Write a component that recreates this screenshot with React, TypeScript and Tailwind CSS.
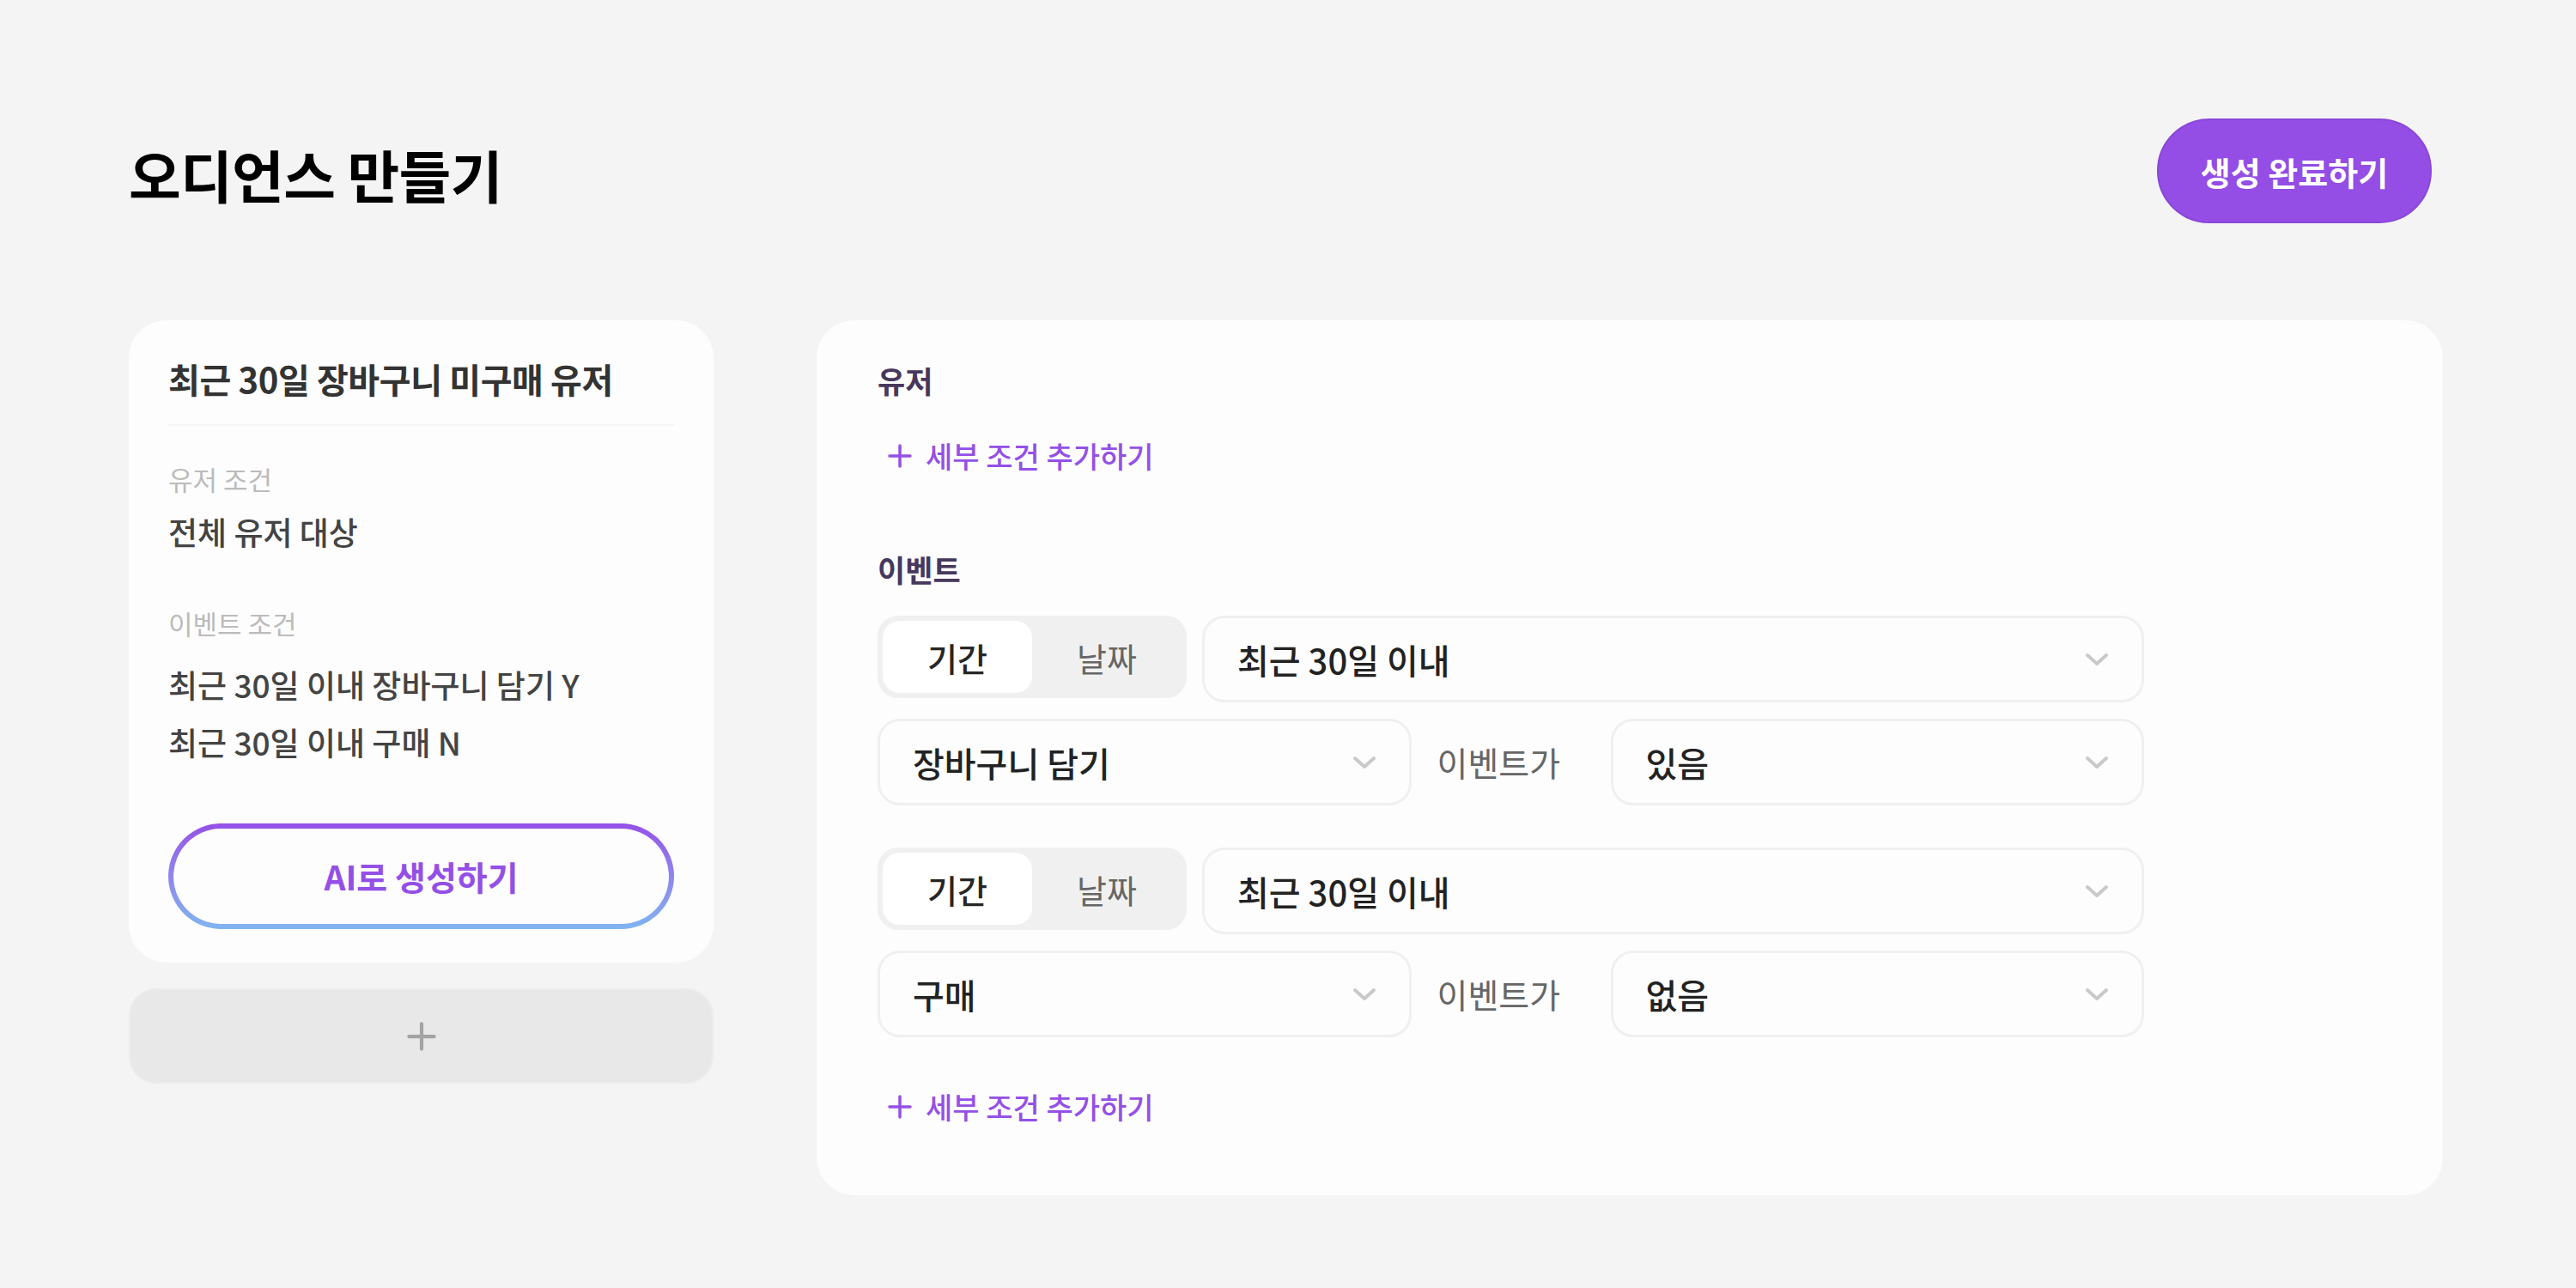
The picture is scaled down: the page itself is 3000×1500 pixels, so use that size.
import React, { useState } from 'react';

interface EventCondition {
  id: number;
  period: string;
  event: string;
  exists: string;
}

const Chevron = () => (
  <svg width="28" height="16" viewBox="0 0 28 16" fill="none">
    <path d="M3 3L14 13L25 3" stroke="#c9c9c9" strokeWidth="4" strokeLinecap="round" strokeLinejoin="round" />
  </svg>
);

const PlusIcon = ({ size, color }: { size: number; color: string }) => (
  <svg width={size} height={size} viewBox="0 0 28 28" fill="none">
    <path d="M14 2V26M2 14H26" stroke={color} strokeWidth="3.5" strokeLinecap="round" />
  </svg>
);

const SelectBox = ({ value, className = '' }: { value: string; className?: string }) => (
  <div
    className={`flex h-[101px] items-center justify-between rounded-[26px] border-[3px] border-[#f0f0f0] bg-[#fdfdfd] pl-[38px] pr-[38px] ${className}`}
  >
    <span className="text-[40px] font-medium text-[#222222]">{value}</span>
    <Chevron />
  </div>
);

const PeriodToggle = () => {
  const [mode, setMode] = useState<'period' | 'date'>('period');

  return (
    <div className="flex h-[96px] w-[360px] shrink-0 rounded-[24px] bg-[#f0f0f0] p-[6px]">
      <button
        type="button"
        onClick={() => setMode('period')}
        className={`flex-1 rounded-[20px] text-[38px] ${mode === 'period' ? 'bg-white font-medium text-[#262626]' : 'text-[#666666]'}`}
      >
        기간
      </button>
      <button
        type="button"
        onClick={() => setMode('date')}
        className={`flex-1 rounded-[20px] text-[38px] ${mode === 'date' ? 'bg-white font-medium text-[#262626]' : 'text-[#666666]'}`}
      >
        날짜
      </button>
    </div>
  );
};

const AddDetailButton = () => (
  <button type="button" className="flex h-[40px] items-center gap-[16px] pl-[12px] text-[#9450e6]">
    <PlusIcon size={28} color="#9450e6" />
    <span className="text-[34px] font-medium leading-[40px]">세부 조건 추가하기</span>
  </button>
);

const EventGroup = ({ condition }: { condition: EventCondition }) => (
  <div className="flex flex-col gap-[19px]">
    <div className="flex items-start gap-[18px]">
      <PeriodToggle />
      <SelectBox value={condition.period} className="flex-1" />
    </div>
    <div className="flex items-center">
      <SelectBox value={condition.event} className="flex-1" />
      <div className="w-[232px] shrink-0 pl-[30px] text-[39px] text-[#666666]">이벤트가</div>
      <SelectBox value={condition.exists} className="flex-1" />
    </div>
  </div>
);

const App = () => {
  const conditions: EventCondition[] = [
    { id: 1, period: '최근 30일 이내', event: '장바구니 담기', exists: '있음' },
    { id: 2, period: '최근 30일 이내', event: '구매', exists: '없음' },
  ];

  return (
    <div className="h-[1500px] w-full bg-[#f4f4f4] pl-[150px] pr-[155px] pt-[138px] font-['Noto_Sans_CJK_KR','Noto_Sans',sans-serif]">
      {/* Header */}
      <div className="flex items-center justify-between">
        <h1 className="mt-[6px] text-[66px] font-bold leading-[76px] tracking-[-0.01em] text-black">오디언스 만들기</h1>
        <button
          type="button"
          className="mr-[13px] h-[122px] w-[320px] rounded-full border-2 border-[#8a47d8] bg-[#944de5] text-[38px] font-bold text-white"
        >
          생성 완료하기
        </button>
      </div>

      <div className="mt-[113px] flex items-start gap-[120px]">
        {/* Left column */}
        <div className="flex w-[681px] shrink-0 flex-col gap-[30px]">
          <div className="rounded-[44px] bg-[#fdfdfd] px-[46px] pb-[39px] pt-[46px]">
            <div className="text-[40px] font-bold leading-[44px] tracking-[-0.01em] text-[#333333]">
              최근 30일 장바구니 미구매 유저
            </div>
            <div className="mt-[31px] h-[2px] bg-[#f5f5f5]" />

            <div className="mt-[44px] text-[31px] leading-[36px] text-[#bbbbbb]">유저 조건</div>
            <div className="mt-[23px] text-[37px] font-medium leading-[40px] text-[#444444]">전체 유저 대상</div>

            <div className="mt-[69px] text-[31px] leading-[36px] text-[#bbbbbb]">이벤트 조건</div>
            <div className="mt-[20px] text-[37px] font-medium leading-[67px] text-[#444444]">
              <div>최근 30일 이내 장바구니 담기 Y</div>
              <div>최근 30일 이내 구매 N</div>
            </div>

            <div className="mt-[61px] rounded-full bg-gradient-to-b from-[#9450e6] to-[#7fb4f1] p-[6px]">
              <button
                type="button"
                className="flex h-[111px] w-full items-center justify-center rounded-full bg-[#fdfdfd] text-[39px] font-bold text-[#9450e6]"
              >
                AI로 생성하기
              </button>
            </div>
          </div>

          <button
            type="button"
            className="flex h-[111px] items-center justify-center rounded-[32px] border-2 border-[#ececec] bg-[#e8e8e8]"
          >
            <PlusIcon size={34} color="#a3a3a3" />
          </button>
        </div>

        {/* Right panel */}
        <div className="flex-1 rounded-[44px] bg-[#fdfdfd] pb-[83px] pl-[71px] pr-[348px] pt-[50px]">
          <div className="text-[35px] font-bold leading-[40px] text-[#47385c]">유저</div>
          <div className="mt-[48px]">
            <AddDetailButton />
          </div>

          <div className="mt-[92px] text-[35px] font-bold leading-[40px] text-[#47385c]">이벤트</div>
          <div className="mt-[34px] flex flex-col gap-[49px]">
            {conditions.map((c) => (
              <EventGroup key={c.id} condition={c} />
            ))}
          </div>

          <div className="mt-[61px]">
            <AddDetailButton />
          </div>
        </div>
      </div>
    </div>
  );
};

export default App;
